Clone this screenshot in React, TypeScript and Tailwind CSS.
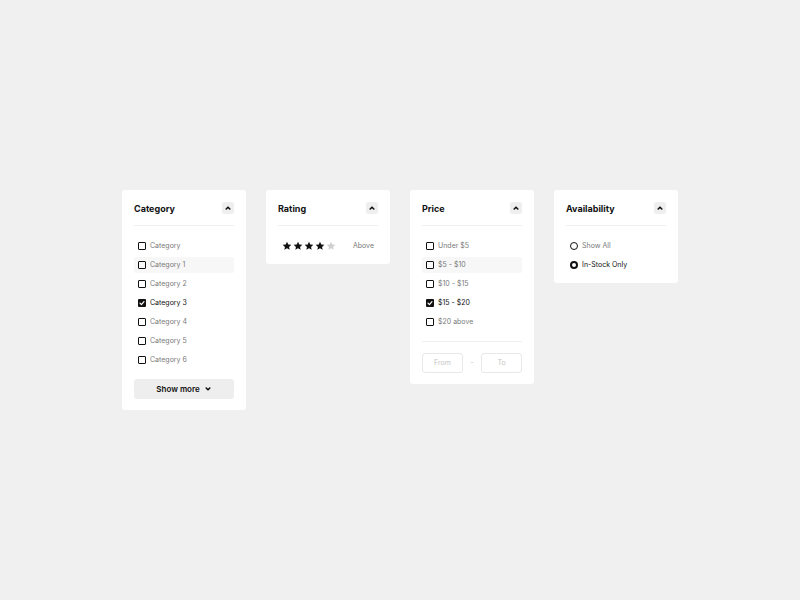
import React from "react";

type Option = { label: string; checked?: boolean; hover?: boolean };

const categories: Option[] = [
  { label: "Category" },
  { label: "Category 1", hover: true },
  { label: "Category 2" },
  { label: "Category 3", checked: true },
  { label: "Category 4" },
  { label: "Category 5" },
  { label: "Category 6" },
];

const prices: Option[] = [
  { label: "Under $5" },
  { label: "$5 - $10", hover: true },
  { label: "$10 - $15" },
  { label: "$15 - $20", checked: true },
  { label: "$20 above" },
];

const availability: Option[] = [
  { label: "Show All" },
  { label: "In-Stock Only", checked: true },
];

function Chevron({ up, className }: { up?: boolean; className?: string }) {
  return (
    <svg viewBox="0 0 8 8" className={className} fill="none">
      <path
        d={up ? "M2.2 5 L4 3.2 L5.8 5" : "M2.2 3 L4 4.8 L5.8 3"}
        stroke="#111"
        strokeWidth="1.6"
        strokeLinecap="round"
        strokeLinejoin="round"
      />
    </svg>
  );
}

function Checkbox({ checked }: { checked?: boolean }) {
  return checked ? (
    <span className="flex h-[8px] w-[8px] items-center justify-center rounded-[1px] bg-[#111]">
      <svg viewBox="0 0 8 8" className="h-[8px] w-[8px]" fill="none">
        <path d="M2 4.2 L3.4 5.6 L6 2.6" stroke="#fff" strokeWidth="1.2" strokeLinecap="round" strokeLinejoin="round" />
      </svg>
    </span>
  ) : (
    <span className="h-[8px] w-[8px] rounded-[1px] border-[1.5px] border-[#111]" />
  );
}

function Radio({ checked }: { checked?: boolean }) {
  return (
    <span
      className={
        checked
          ? "h-[8px] w-[8px] rounded-full border-[2.5px] border-[#111]"
          : "h-[8px] w-[8px] rounded-full border-[1.5px] border-[#111]"
      }
    />
  );
}

function Card({ title, children }: { title: string; children: React.ReactNode }) {
  return (
    <div className="w-[124px] rounded-[3px] bg-white px-3 pt-3 pb-[10px]">
      <div className="flex h-[12px] items-center justify-between">
        <span className="text-[9px] font-bold leading-none text-[#111]">{title}</span>
        <button className="flex h-[12px] w-[12px] items-center justify-center rounded-[2px] bg-[#efefef]">
          <Chevron up className="h-[8px] w-[8px]" />
        </button>
      </div>
      <div className="mt-[11px] border-t border-[#f0f0f0]" />
      <div className="mt-[12px]">{children}</div>
    </div>
  );
}

function OptionList({ items, radio }: { items: Option[]; radio?: boolean }) {
  return (
    <div className="flex flex-col gap-[3px]">
      {items.map((item) => (
        <div
          key={item.label}
          className={
            item.hover
              ? "flex h-4 items-center gap-[4px] rounded-[2px] bg-[#f7f7f7] px-[4px]"
              : "flex h-4 items-center gap-[4px] px-[4px]"
          }
        >
          {radio ? <Radio checked={item.checked} /> : <Checkbox checked={item.checked} />}
          <span className={item.checked ? "text-[7px] text-[#111]" : "text-[7px] text-[#7a7a7a]"}>
            {item.label}
          </span>
        </div>
      ))}
    </div>
  );
}

function Star({ filled }: { filled: boolean }) {
  return (
    <svg viewBox="0 0 24 24" className="h-[10px] w-[10px]">
      <path
        d="M12 1.8 L15.1 8.4 L22.3 9.2 L16.9 14.1 L18.4 21.2 L12 17.6 L5.6 21.2 L7.1 14.1 L1.7 9.2 L8.9 8.4 Z"
        fill={filled ? "#111" : "#cfcfcf"}
      />
    </svg>
  );
}

export default function App() {
  return (
    <div
      className="flex min-h-screen items-start justify-center gap-5 bg-[#f0f0f0] pt-[190px]"
      style={{ fontFamily: "Inter, 'Noto Sans', sans-serif" }}
    >
      <Card title="Category">
        <OptionList items={categories} />
        <button className="mt-[11px] mb-[1px] flex h-[20px] w-full items-center justify-center gap-[4px] rounded-[3px] bg-[#eeeeee] text-[8px] font-semibold text-[#111]">
          Show more
          <Chevron className="h-[8px] w-[8px]" />
        </button>
      </Card>

      <Card title="Rating">
        <div className="flex h-4 items-center justify-between px-[4px]">
          <div className="flex items-center gap-[1px]">
            {[0, 1, 2, 3, 4].map((i) => (
              <Star key={i} filled={i < 4} />
            ))}
          </div>
          <span className="text-[7px] text-[#7a7a7a]">Above</span>
        </div>
      </Card>

      <Card title="Price">
        <OptionList items={prices} />
        <div className="mt-[11px] border-t border-[#f0f0f0]" />
        <div className="mt-[11px] mb-[1px] flex items-center">
          <div className="flex h-[20px] flex-1 items-center justify-center rounded-[3px] border border-[#e8e8e8] text-[7px] text-[#c4c4c4]">
            From
          </div>
          <span className="w-[18px] text-center text-[7px] text-[#c4c4c4]">-</span>
          <div className="flex h-[20px] flex-1 items-center justify-center rounded-[3px] border border-[#e8e8e8] text-[7px] text-[#c4c4c4]">
            To
          </div>
        </div>
      </Card>

      <Card title="Availability">
        <OptionList items={availability} radio />
      </Card>
    </div>
  );
}
